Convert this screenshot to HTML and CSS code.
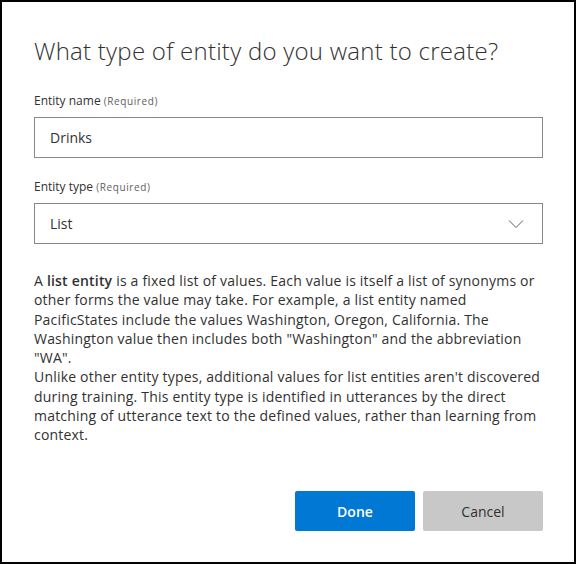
FILE: index.html
```html
<!DOCTYPE html>
<html lang="en">
<head>
<meta charset="utf-8">
<title>Create entity</title>
<link rel="stylesheet" href="styles.css">
</head>
<body>
<div class="dialog">
  <h1 class="title">What type of entity do you want to create?</h1>
  <div class="field">
    <label class="label">Entity name <span class="req">(Required)</span></label>
    <div class="box">Drinks</div>
  </div>
  <div class="field">
    <label class="label">Entity type <span class="req">(Required)</span></label>
    <div class="box select">
      <span>List</span>
      <svg class="chev" width="16" height="10" viewBox="0 0 16 10"><path d="M1 1.5 L8 8.5 L15 1.5" fill="none" stroke="#605e5c" stroke-width="1"/></svg>
    </div>
  </div>
  <div class="desc">
    <p>A <b>list entity</b> is a fixed list of values. Each value is itself a list of synonyms or other forms the value may take. For example, a list entity named PacificStates include the values Washington, Oregon, California. The Washington value then includes both "Washington" and the abbreviation "WA".</p>
    <p>Unlike other entity types, additional values for list entities aren't discovered during training. This entity type is identified in utterances by the direct matching of utterance text to the defined values, rather than learning from context.</p>
  </div>
  <div class="actions">
    <button class="btn primary">Done</button>
    <button class="btn secondary">Cancel</button>
  </div>
</div>
</body>
</html>
```

FILE: styles.css
```css
html, body {
  margin: 0;
  padding: 0;
  background: #fff;
}
.dialog {
  box-sizing: border-box;
  width: 576px;
  height: 564px;
  border: 2px solid #000;
  padding: 0 31px 0 32px;
  display: flex;
  flex-direction: column;
  font-family: "Open Sans", "Noto Sans", sans-serif;
  color: #323130;
}
.title {
  margin: 33px 0 0 0;
  font-size: 24px;
  font-weight: 300;
  line-height: 32px;
  letter-spacing: 0.25px;
  color: #323130;
}
.field {
  display: flex;
  flex-direction: column;
}
.field:first-of-type {
  margin-top: 26px;
}
.field + .field {
  margin-top: 21px;
}
.label {
  font-size: 12px;
  line-height: 16px;
  color: #323130;
  margin-bottom: 8px;
}
.req {
  font-size: 10px;
  letter-spacing: 0.6px;
  color: #605e5c;
}
.box {
  box-sizing: border-box;
  height: 41px;
  border: 1px solid #8a8886;
  padding: 0 15px;
  display: flex;
  align-items: center;
  font-size: 14px;
  color: #323130;
}
.select {
  justify-content: space-between;
  padding-right: 18px;
}
.desc {
  margin-top: 27px;
  font-size: 14px;
  line-height: 19.25px;
  letter-spacing: 0.2px;
  color: #323130;
}
.desc p {
  margin: 0;
}
.desc b {
  font-weight: 600;
}
.actions {
  margin-top: auto;
  margin-bottom: 31px;
  display: flex;
  justify-content: flex-end;
  gap: 8px;
}
.btn {
  width: 120px;
  height: 40px;
  border: none;
  border-radius: 2px;
  font-family: "Open Sans", "Noto Sans", sans-serif;
  font-size: 14px;
  font-weight: 600;
}
.primary {
  background: #0078d4;
  color: #fff;
}
.secondary {
  background: #c8c8c8;
  color: #323130;
  font-weight: 400;
}
```
